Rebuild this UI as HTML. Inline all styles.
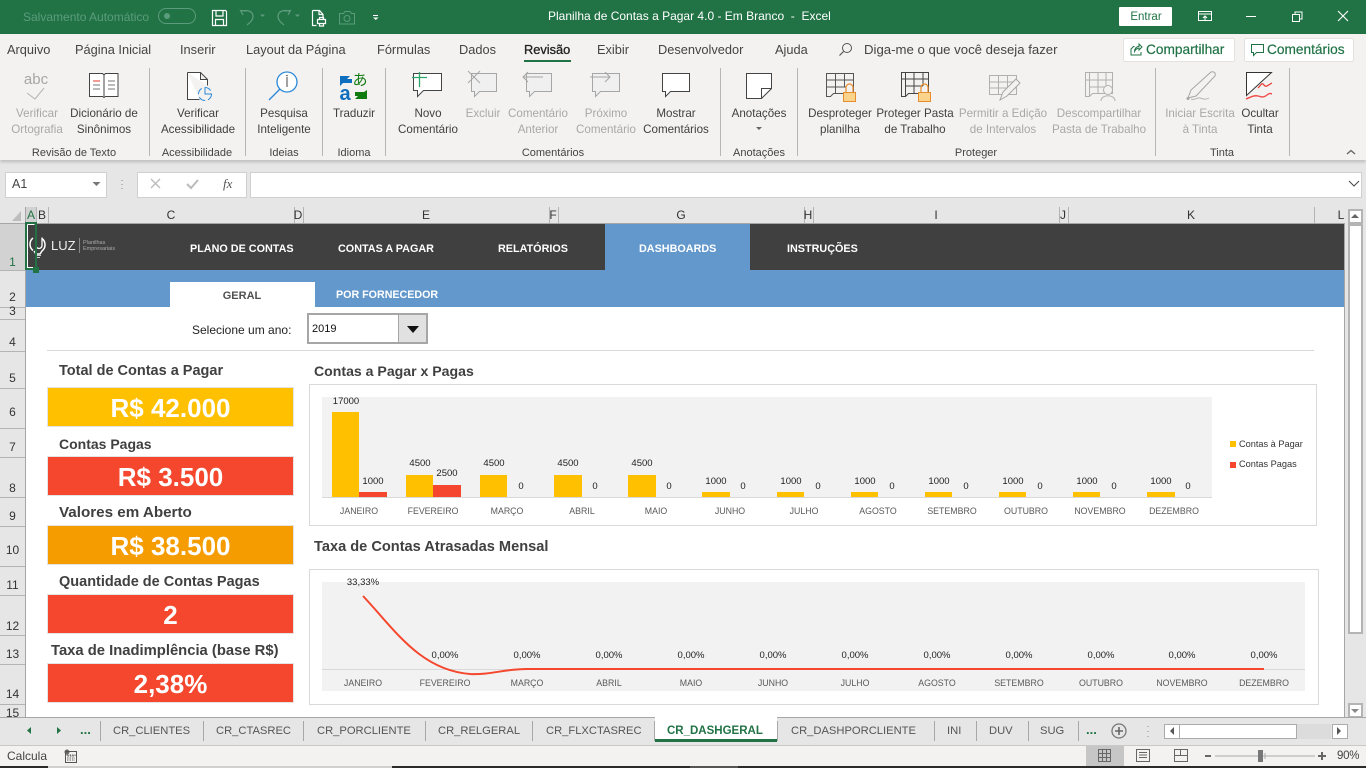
<!DOCTYPE html>
<html lang="pt-BR"><head><meta charset="utf-8"><title>Planilha de Contas a Pagar 4.0</title>
<style>
html,body{margin:0;padding:0}
body{width:1366px;height:768px;overflow:hidden;position:relative;background:#e6e6e6;font-family:"Liberation Sans",sans-serif;color:#333}
.a{position:absolute}
.t{position:absolute;white-space:nowrap;line-height:16px;font-size:11.6px;color:#404040}
.c{transform:translateX(-50%)}
.d{color:#a8a8a8}
.tab{font-size:12.8px;color:#444;top:42px}
.g{font-size:11px;color:#444;top:145px}
.sep{position:absolute;top:68px;width:1px;height:88px;background:#b8b6b4}
.ch{font-size:12px;top:207px;color:#333}
.rh{font-size:12px;color:#333;width:25px;left:0;text-align:center}
.rl{position:absolute;left:0;width:25px;height:1px;background:#b4b4b4}
.cl{position:absolute;top:207px;width:1px;height:16px;background:#b4b4b4}
.nav{font-size:10.8px;font-weight:bold;color:#fff;top:241px}
.lab{font-size:14.6px;font-weight:bold;color:#404040}
.kpi{position:absolute;left:47px;width:245px;height:38px;border:1px solid #e4e4e4;color:#fff;font-weight:bold;font-size:26px;line-height:40px;text-align:center}
.st{font-size:11.2px;color:#555;top:723px}
.ts{position:absolute;top:721px;width:1px;height:20px;background:#a8a8a8}
svg{position:absolute;left:0;top:0;overflow:visible}
svg text{font-family:"Liberation Sans",sans-serif}
</style></head><body>

<!-- title bar -->
<div class="a" style="left:0;top:0;width:1366px;height:34px;background:#217346"></div>
<div class="t" style="left:23px;top:9px;font-size:12px;color:#5c9c7c">Salvamento Automático</div>
<div class="t" style="left:548px;top:8px;font-size:12px;color:#fff">Planilha de Contas a Pagar 4.0 - Em Branco&nbsp; -&nbsp; Excel</div>
<div class="a" style="left:1119px;top:7px;width:53px;height:19px;background:#fff;border-radius:1px"></div>
<div class="t c" style="left:1146px;top:9px;font-size:11.5px;color:#217346">Entrar</div>

<!-- ribbon bg -->
<div class="a" style="left:0;top:34px;width:1366px;height:126px;background:#f3f2f1;box-shadow:0 2px 3px rgba(0,0,0,.18)"></div>

<div class="t tab" style="left:7px">Arquivo</div>
<div class="t tab" style="left:75px">Página Inicial</div>
<div class="t tab" style="left:180px">Inserir</div>
<div class="t tab" style="left:246px">Layout da Página</div>
<div class="t tab" style="left:377px">Fórmulas</div>
<div class="t tab" style="left:459px">Dados</div>
<div class="t tab" style="left:524px;color:#222;-webkit-text-stroke:.3px #222">Revisão</div>
<div class="a" style="left:524px;top:60px;width:47px;height:2px;background:#217346"></div>
<div class="t tab" style="left:597px">Exibir</div>
<div class="t tab" style="left:658px">Desenvolvedor</div>
<div class="t tab" style="left:775px">Ajuda</div>
<div class="t tab" style="left:864px;font-size:13.2px">Diga-me o que você deseja fazer</div>

<div class="a" style="left:1123px;top:38px;width:110px;height:22px;background:#fff;border:1px solid #e4e2e0;border-radius:2px"></div>
<div class="t" style="left:1146px;top:42px;font-size:13.7px;color:#217346;-webkit-text-stroke:.2px #217346">Compartilhar</div>
<div class="a" style="left:1244px;top:38px;width:108px;height:22px;background:#fff;border:1px solid #e4e2e0;border-radius:2px"></div>
<div class="t" style="left:1267px;top:42px;font-size:13.7px;color:#217346;-webkit-text-stroke:.2px #217346">Comentários</div>

<!-- ribbon separators -->
<div class="sep" style="left:149px"></div><div class="sep" style="left:245px"></div><div class="sep" style="left:322px"></div><div class="sep" style="left:385px"></div><div class="sep" style="left:720px"></div><div class="sep" style="left:797px"></div><div class="sep" style="left:1155px"></div><div class="sep" style="left:1289px"></div>

<!-- ribbon labels -->
<div class="t c d" style="left:37px;top:106px">Verificar</div><div class="t c d" style="left:37px;top:122px">Ortografia</div>
<div class="t c" style="left:104px;top:106px">Dicionário de</div><div class="t c" style="left:104px;top:122px">Sinônimos</div>
<div class="t c" style="left:198px;top:106px">Verificar</div><div class="t c" style="left:198px;top:122px">Acessibilidade</div>
<div class="t c" style="left:284px;top:106px">Pesquisa</div><div class="t c" style="left:284px;top:122px">Inteligente</div>
<div class="t c" style="left:354px;top:106px">Traduzir</div>
<div class="t c" style="left:428px;top:106px">Novo</div><div class="t c" style="left:428px;top:122px">Comentário</div>
<div class="t c d" style="left:483px;top:106px">Excluir</div>
<div class="t c d" style="left:538px;top:106px">Comentário</div><div class="t c d" style="left:538px;top:122px">Anterior</div>
<div class="t c d" style="left:606px;top:106px">Próximo</div><div class="t c d" style="left:606px;top:122px">Comentário</div>
<div class="t c" style="left:676px;top:106px">Mostrar</div><div class="t c" style="left:676px;top:122px">Comentários</div>
<div class="t c" style="left:759px;top:106px">Anotações</div>
<div class="t c" style="left:840px;top:106px">Desproteger</div><div class="t c" style="left:840px;top:122px">planilha</div>
<div class="t c" style="left:915px;top:106px">Proteger Pasta</div><div class="t c" style="left:915px;top:122px">de Trabalho</div>
<div class="t c d" style="left:1003px;top:106px">Permitir a Edição</div><div class="t c d" style="left:1003px;top:122px">de Intervalos</div>
<div class="t c d" style="left:1099px;top:106px">Descompartilhar</div><div class="t c d" style="left:1099px;top:122px">Pasta de Trabalho</div>
<div class="t c d" style="left:1200px;top:106px">Iniciar Escrita</div><div class="t c d" style="left:1200px;top:122px">à Tinta</div>
<div class="t c" style="left:1260px;top:106px">Ocultar</div><div class="t c" style="left:1260px;top:122px">Tinta</div>

<div class="t c g" style="left:74px">Revisão de Texto</div>
<div class="t c g" style="left:197px">Acessibilidade</div>
<div class="t c g" style="left:284px">Ideias</div>
<div class="t c g" style="left:354px">Idioma</div>
<div class="t c g" style="left:553px">Comentários</div>
<div class="t c g" style="left:759px">Anotações</div>
<div class="t c g" style="left:976px">Proteger</div>
<div class="t c g" style="left:1222px">Tinta</div>

<!-- formula bar -->
<div class="a" style="left:5px;top:172px;width:100px;height:24px;background:#fff;border:1px solid #d0d0d0"></div>
<div class="t" style="left:12px;top:176px;font-size:12.5px;color:#444">A1</div>
<div class="a" style="left:137px;top:172px;width:108px;height:24px;background:#fff;border:1px solid #d0d0d0"></div>
<div class="a" style="left:250px;top:172px;width:1110px;height:24px;background:#fff;border:1px solid #d0d0d0"></div>
<div class="t" style="left:223px;top:176px;font-size:13px;font-family:'Liberation Serif',serif;font-style:italic;color:#555">fx</div>

<!-- column headers -->
<div class="a" style="left:25px;top:207px;width:11px;height:16px;background:#d2d2d2"></div>
<div class="a" style="left:0;top:223px;width:1344px;height:1px;background:#a6a6a6"></div>
<div class="a" style="left:25px;top:207px;width:1px;height:510px;background:#a6a6a6"></div>
<div class="cl" style="left:36px"></div><div class="cl" style="left:48px"></div><div class="cl" style="left:294px"></div><div class="cl" style="left:303px"></div><div class="cl" style="left:549px"></div><div class="cl" style="left:558px"></div><div class="cl" style="left:804px"></div><div class="cl" style="left:813px"></div><div class="cl" style="left:1059px"></div><div class="cl" style="left:1068px"></div><div class="cl" style="left:1314px"></div>
<div class="t c ch" style="left:31px;color:#217346">A</div>
<div class="t c ch" style="left:42px">B</div>
<div class="t c ch" style="left:171px">C</div>
<div class="t c ch" style="left:298px">D</div>
<div class="t c ch" style="left:426px">E</div>
<div class="t c ch" style="left:553px">F</div>
<div class="t c ch" style="left:681px">G</div>
<div class="t c ch" style="left:808px">H</div>
<div class="t c ch" style="left:936px">I</div>
<div class="t c ch" style="left:1063px">J</div>
<div class="t c ch" style="left:1191px">K</div>
<div class="t c ch" style="left:1341px">L</div>

<!-- row headers -->
<div class="a" style="left:0;top:224px;width:25px;height:46px;background:#d2d2d2"></div>
<div class="rl" style="top:270px"></div><div class="rl" style="top:307px"></div><div class="rl" style="top:319px"></div><div class="rl" style="top:351px"></div><div class="rl" style="top:388px"></div><div class="rl" style="top:428px"></div><div class="rl" style="top:457px"></div><div class="rl" style="top:497px"></div><div class="rl" style="top:526px"></div><div class="rl" style="top:566px"></div><div class="rl" style="top:595px"></div><div class="rl" style="top:635px"></div><div class="rl" style="top:664px"></div><div class="rl" style="top:704px"></div>
<div class="t rh" style="top:254px;color:#217346">1</div>
<div class="t rh" style="top:289px">2</div>
<div class="t rh" style="top:303px">3</div>
<div class="t rh" style="top:334px">4</div>
<div class="t rh" style="top:370px">5</div>
<div class="t rh" style="top:404px">6</div>
<div class="t rh" style="top:439px">7</div>
<div class="t rh" style="top:480px">8</div>
<div class="t rh" style="top:508px">9</div>
<div class="t rh" style="top:542px">10</div>
<div class="t rh" style="top:577px">11</div>
<div class="t rh" style="top:618px">12</div>
<div class="t rh" style="top:646px">13</div>
<div class="t rh" style="top:686px">14</div>
<div class="t rh" style="top:705px">15</div>

<!-- sheet -->
<div class="a" style="left:26px;top:224px;width:1318px;height:493px;background:#fff"></div>
<div class="a" style="left:26px;top:224px;width:1318px;height:46px;background:#404040"></div>
<div class="a" style="left:26px;top:270px;width:1318px;height:37px;background:#6398cc"></div>
<div class="a" style="left:605px;top:224px;width:145px;height:46px;background:#6398cc"></div>
<div class="a" style="left:170px;top:282px;width:145px;height:25px;background:#fff"></div>
<div class="t" style="left:51px;top:238px;font-size:13px;color:#eee">LUZ</div>
<div class="a" style="left:79px;top:238px;width:1px;height:15px;background:#888"></div>
<div class="t" style="left:83px;top:240px;font-size:5.5px;line-height:6px;color:#aaa">Planilhas<br>Empresariais</div>
<div class="t nav" style="left:190px">PLANO DE CONTAS</div>
<div class="t nav" style="left:338px">CONTAS A PAGAR</div>
<div class="t nav" style="left:498px">RELATÓRIOS</div>
<div class="t nav" style="left:639px">DASHBOARDS</div>
<div class="t nav" style="left:787px">INSTRUÇÕES</div>
<div class="t c" style="left:242px;top:288px;font-size:11px;font-weight:bold;color:#505050">GERAL</div>
<div class="t" style="left:336px;top:287px;font-size:10.7px;font-weight:bold;color:#fff">POR FORNECEDOR</div>

<div class="t" style="left:192px;top:322px;font-size:12px;color:#222">Selecione um ano:</div>
<div class="a" style="left:307px;top:313px;width:117px;height:27px;border:2px solid #a6a6a6;background:#fff"></div>
<div class="a" style="left:398px;top:315px;width:28px;height:27px;background:#e1e1e1;border-left:1px solid #a6a6a6;box-sizing:border-box"></div>
<div class="t" style="left:312px;top:321px;font-size:11px;color:#111">2019</div>
<div class="a" style="left:47px;top:350px;width:1267px;height:1px;background:#d9d9d9"></div>

<!-- KPIs -->
<div class="t lab" style="left:59px;top:363px;font-size:14.5px">Total de Contas a Pagar</div>
<div class="kpi" style="top:387px;background:#ffc000">R$ 42.000</div>
<div class="t lab" style="left:59px;top:436px;font-size:14px">Contas Pagas</div>
<div class="kpi" style="top:456px;background:#f4472e">R$ 3.500</div>
<div class="t lab" style="left:59px;top:505px;font-size:15.2px">Valores em Aberto</div>
<div class="kpi" style="top:525px;background:#f59c00">R$ 38.500</div>
<div class="t lab" style="left:59px;top:574px;font-size:14.5px">Quantidade de Contas Pagas</div>
<div class="kpi" style="top:594px;background:#f4472e">2</div>
<div class="t lab" style="left:51px;top:643px;font-size:14.8px">Taxa de Inadimplência (base R$)</div>
<div class="kpi" style="top:663px;background:#f4472e">2,38%</div>

<div class="t lab" style="left:314px;top:363px;font-size:14.1px">Contas a Pagar x Pagas</div>
<div class="t lab" style="left:314px;top:539px">Taxa de Contas Atrasadas Mensal</div>

<!-- vertical scrollbar -->
<div class="a" style="left:1344px;top:207px;width:22px;height:510px;background:#e6e6e6"></div>
<div class="a" style="left:1344px;top:223px;width:1px;height:494px;background:#a6a6a6"></div>
<div class="a" style="left:1348px;top:209px;width:11px;height:11px;background:#fff;border:2px solid #b4b4b4"></div>
<div class="a" style="left:1348px;top:224px;width:11px;height:406px;background:#fff;border:2px solid #b4b4b4"></div>
<div class="a" style="left:1348px;top:703px;width:11px;height:11px;background:#fff;border:2px solid #b4b4b4"></div>

<!-- tab strip -->
<div class="a" style="left:0;top:717px;width:1366px;height:1px;background:#a6a6a6"></div>
<div class="a" style="left:0;top:718px;width:1366px;height:27px;background:#e6e6e6"></div>
<div class="a" style="left:655px;top:717px;width:122px;height:22px;background:#fff"></div>
<div class="a" style="left:655px;top:739px;width:122px;height:3px;background:#217346"></div>
<div class="ts" style="left:100px"></div><div class="ts" style="left:203px"></div><div class="ts" style="left:303px"></div><div class="ts" style="left:425px"></div><div class="ts" style="left:532px"></div><div class="ts" style="left:654px"></div><div class="ts" style="left:777px"></div><div class="ts" style="left:934px"></div><div class="ts" style="left:976px"></div><div class="ts" style="left:1028px"></div><div class="ts" style="left:1078px"></div>
<div class="t st" style="left:113px">CR_CLIENTES</div>
<div class="t st" style="left:216px">CR_CTASREC</div>
<div class="t st" style="left:317px">CR_PORCLIENTE</div>
<div class="t st" style="left:438px">CR_RELGERAL</div>
<div class="t st" style="left:546px">CR_FLXCTASREC</div>
<div class="t st" style="left:667px;color:#217346;font-weight:bold;font-size:11.5px">CR_DASHGERAL</div>
<div class="t st" style="left:791px">CR_DASHPORCLIENTE</div>
<div class="t st" style="left:947px">INI</div>
<div class="t st" style="left:989px">DUV</div>
<div class="t st" style="left:1040px">SUG</div>
<div class="t" style="left:80px;top:722px;font-size:13px;font-weight:bold;color:#217346">...</div>
<div class="t" style="left:1086px;top:722px;font-size:13px;font-weight:bold;color:#217346">...</div>
<div class="a" style="left:1164px;top:724px;width:14px;height:13px;background:#fff;border:1px solid #ababab"></div>
<div class="a" style="left:1179px;top:724px;width:116px;height:13px;background:#fff;border:1px solid #ababab"></div>
<div class="a" style="left:1297px;top:724px;width:34px;height:15px;background:#dcdcdc"></div>
<div class="a" style="left:1332px;top:724px;width:14px;height:13px;background:#fff;border:1px solid #ababab"></div>

<!-- status bar -->
<div class="a" style="left:0;top:745px;width:1366px;height:1px;background:#c8c8c8"></div>
<div class="a" style="left:0;top:746px;width:1366px;height:20px;background:#f3f2f1"></div>
<div class="a" style="left:0;top:766px;width:1366px;height:2px;background:#2b2b2b"></div>
<div class="a" style="left:48px;top:766px;width:344px;height:2px;background:#d0d0d0"></div>
<div class="a" style="left:690px;top:766px;width:48px;height:2px;background:#555"></div>
<div class="a" style="left:1086px;top:746px;width:38px;height:20px;background:#c6c6c6"></div>
<div class="t" style="left:7px;top:748px;font-size:12px;color:#444">Calcula</div>
<div class="t" style="left:1337px;top:748px;font-size:11.5px;color:#444;letter-spacing:-.3px">90%</div>

<!-- icons -->
<svg width="1366" height="768" viewBox="0 0 1366 768" fill="none">
<!-- title icons -->
<rect x="158.500" y="8.500" width="37" height="15" rx="7.500" stroke="#5c9c7c"/><circle cx="167" cy="16" r="3" fill="#5c9c7c"/>
<path d="M212.500 10.500h13l1 1v14h-14z M216 10.500v5.500h7v-5.500 M215.500 25.500v-6h8v6" stroke="#fff" stroke-width="1.200"/>
<path d="M243 15l-2.500-4.500 6 .5M241 11.500c5-2 12-1 12 5 0 3.500-3 6-6 8.500" stroke="#5c9c7c" stroke-width="1.200"/>
<path d="M260 14.500l2.500 2.500 2.500-2.500zM295 14.500l2.500 2.500 2.500-2.500z" fill="#5c9c7c"/>
<path d="M288 15l2.500-4.500-6 .5M290 11.500c-5-2-12-1-12 5 0 3.500 3 6 6 8.500" stroke="#5c9c7c" stroke-width="1.200"/>
<path d="M312.500 10.500h7l3.500 4v4M312.500 10.500v15h4M319 10.500v4h4" stroke="#fff" stroke-width="1.200"/>
<path d="M317.500 19.500h8v4h-8zM319.500 19.500v-2h4v2M319.500 23.500v2.500h4v-2.500" stroke="#fff" stroke-width="1.200"/>
<path d="M339.500 13.500h4l1.500-2h5l1.500 2h3v10.500h-15z" stroke="#5c9c7c"/><circle cx="347" cy="18.500" r="3" stroke="#5c9c7c"/>
<path d="M373 15.500h5" stroke="#fff"/><path d="M373 17.500h5.500l-2.750 2.500z" fill="#fff"/>
<path d="M1198.500 11.500h13v9h-13zM1198.500 14h13M1205 20v-4M1203 18l2-2 2 2" stroke="#fff"/>
<path d="M1246 16.500h10" stroke="#fff"/>
<path d="M1292.500 14.500h7v7h-7zM1295 14.500v-2.500h7v7h-2.500" stroke="#fff"/>
<path d="M1338 11l10 10M1348 11l-10 10" stroke="#fff" stroke-width="1.100"/>
<!-- search + share -->
<circle cx="847" cy="48" r="4.500" stroke="#555"/><path d="M843.500 51.500l-4 4" stroke="#555" stroke-width="1.200"/>
<path d="M1134.500 46.500h-1l-2.500 2.500v6h10v-3M1134.500 51.500c0-3 2-5 4.500-5v-2.500l3 3-3 3v-2c-1.500 0-3 1-4.500 3.500z" stroke="#217346"/>
<path d="M1251.500 44.500h12v8h-7l-3 3v-3h-2z" stroke="#217346"/>
<!-- abc -->
<text x="36" y="84" text-anchor="middle" font-size="15" fill="#a6a6a6">abc</text>
<path d="M27 93l8 6 9-11" stroke="#b5b5b5"/>
<!-- dictionary -->
<path d="M89.500 73.500h13l1.500 1.500 1.500-1.500h12.500v23h-13l-1 1-1-1h-13.500z" stroke="#444" fill="#fff"/>
<path d="M104 75v21" stroke="#444"/>
<path d="M93 81h7" stroke="#e8352b"/><path d="M93 85h7M93 89h7M108 81h7M108 85h7M108 89h7" stroke="#777"/>
<!-- accessibility -->
<path d="M187.500 72.500h13l7 7v6M187.500 72.500v27h12M200.500 72.500v7h7" stroke="#444" fill="#fff"/>
<circle cx="205" cy="94" r="6.500" stroke="#2b88d8" stroke-dasharray="7 3" fill="#f3f2f1"/>
<path d="M205 88v6h6" stroke="#2b88d8"/>
<!-- search -->
<circle cx="287" cy="82" r="10" stroke="#2b88d8" stroke-width="1.300" fill="#fff"/>
<path d="M280 89l-11 11" stroke="#2b88d8" stroke-width="1.300"/>
<path d="M287 77v10" stroke="#444"/><circle cx="287" cy="75.500" r=".8" fill="#444"/>
<!-- translate -->
<path d="M340 76v10l3-3h9v-4h-5l3-3z" fill="#106ebe"/>
<text x="345" y="100" text-anchor="middle" font-size="20" font-weight="bold" fill="#106ebe">a</text>
<text x="360" y="85" text-anchor="middle" font-size="15" fill="#107c10" style="font-family:'Noto Sans CJK JP',sans-serif">あ</text>
<path d="M367 90v9h-12l3-3h-3v-4h9z" fill="#107c10"/>
<!-- comments -->
<path d="M413.500 73.500h28v17h-18l-6 6v-6h-4z" stroke="#444" fill="#fff"/><path d="M419.500 72v15M412 77.500h15" stroke="#2ea56a" stroke-width="1.300"/>
<path d="M471.500 73.500h25v18h-17l-5 5v-5h-3z" stroke="#a6a6a6" fill="#f0f0f0"/><path d="M468 71l12 12M480 71l-12 12" stroke="#a6a6a6"/>
<path d="M526.500 73.500h25v18h-17l-5 5v-5h-3z" stroke="#a6a6a6" fill="#f0f0f0"/><path d="M523 77h20M528 72l-5 5 5 5" stroke="#a6a6a6"/>
<path d="M592.500 73.500h27v18h-19l-5 5v-5h-3z" stroke="#a6a6a6" fill="#f0f0f0"/><path d="M590 77h20M605 72l5 5-5 5" stroke="#a6a6a6"/>
<path d="M662.500 73.500h27v18h-19l-5 5v-5h-3z" stroke="#444" fill="#fff"/>
<!-- note -->
<path d="M746.500 73.500h25v15l-10 10h-15z" stroke="#444" fill="#fff"/><path d="M761.500 98v-9.500h10" stroke="#444"/>
<path d="M756 127h6l-3 3z" fill="#666"/>
<!-- protect sheet -->
<path d="M826.500 73.500h27v20h-20l-3 3h-4zM826.500 80h27M826.500 87h20M835.500 73.500v20M844.500 73.500v14" stroke="#555"/>
<rect x="843.500" y="92.500" width="12" height="9" fill="#fbd38a" stroke="#e88d2d"/><path d="M846 92v-4.500a3.500 3.500 0 0 1 7 0v4.500" stroke="#e88d2d" stroke-width="1.200"/>
<path d="M901.500 72.500h27v21h-20l-3 3h-4zM905.500 72.500v24M901.500 79h27M905 86h18M914 73v20M923 73v13" stroke="#444"/>
<rect x="918.500" y="92.500" width="12" height="9" fill="#fbd38a" stroke="#e88d2d"/><path d="M921 92v-4.500a3.500 3.500 0 0 1 7 0v4.500" stroke="#e88d2d" stroke-width="1.200"/>
<!-- allow edit -->
<path d="M989.500 75.500h27v19h-27zM989.500 82h27M989.500 88h27M998.500 75.500v19M1007.500 75.500v19" stroke="#b0b0b0"/>
<path d="M1000 100l3-8 13-13 4 4-13 13z" stroke="#a6a6a6" fill="#f3f2f1"/>
<path d="M1085.500 72.500h27v21h-20l-3 3h-4zM1089.500 72.500v24M1085.500 80h27M1089 87h17M1098 73v20M1106 73v14" stroke="#b0b0b0"/>
<circle cx="1108" cy="90" r="4.500" stroke="#b0b0b0" fill="#f3f2f1"/><path d="M1101 101c0-7 14-7 14 0" stroke="#b0b0b0" fill="#f3f2f1"/>
<!-- ink -->
<path d="M1188 98l3-8 20-18c3-1 5 1 4 4l-19 20z" stroke="#a6a6a6"/><circle cx="1188" cy="98.500" r="1.500" fill="#a6a6a6"/>
<path d="M1191 99c3 2 6-2 9-1s6 2 9 0" stroke="#b5b5b5"/>
<path d="M1246.500 72.500h25l-25 23z" fill="#fff"/>
<path d="M1246.500 95.500v-23h25l-25 23z" stroke="#333"/>
<path d="M1258 88c3-3 4-6 6-3s4 0 8-2" stroke="#e8352b" stroke-width="1.200"/>
<path d="M1246 99c5-2 8-4 12-3s5 2 9-1 4-1 5-1" stroke="#f04a4a" stroke-width="1.400"/>
<path d="M1347 154l4-3.500 4 3.500" stroke="#666" stroke-width="1.400"/>
<!-- formula bar marks -->
<path d="M92.500 182h8l-4 4z" fill="#777"/>
<path d="M122 180v1M122 184v1M122 188v1" stroke="#aaa" stroke-width="1.500"/>
<path d="M151 179l9 9M160 179l-9 9" stroke="#bbb" stroke-width="1.300"/>
<path d="M187 184l4 4 7-8" stroke="#bbb" stroke-width="2"/>
<path d="M1349 181l5 5 5-5" stroke="#444"/>
<!-- select-all triangle -->
<path d="M21 211v10h-9z" fill="#bdbdbd"/>
<!-- logo -->
<path d="M33 238a8 8 0 0 0 0 12.500M34 251l2 3h4l2-3a8 8 0 0 0 0-12.500" stroke="#fff" stroke-width="1.500"/>
<path d="M36 237.500v8a3 3 0 0 0 6 0v-8" stroke="#fff" stroke-width="1.300"/>
<path d="M35 255.500h6M36 257.500h4" stroke="#ccc"/>
<!-- selection -->
<rect x="26" y="223" width="10" height="46" stroke="#217346" stroke-width="2"/>
<path d="M27.500 224.500h7M27.500 224.500v43h7" stroke="#fff"/>
<rect x="33" y="267" width="6" height="6" fill="#217346"/>
<!-- combobox arrow -->
<path d="M407 326h12l-6 7z" fill="#111"/>
<!-- vscroll arrows -->
<path d="M1351 218l4-4 4 4z" fill="#666"/><path d="M1351 709l4 4 4-4z" fill="#888"/>
<!-- tab arrows -->
<path d="M31 727l-4 3.500 4 3.500z" fill="#217346"/><path d="M57 727l4 3.500-4 3.500z" fill="#217346"/>
<circle cx="1119" cy="731" r="7" stroke="#777" stroke-width="1.300"/><path d="M1115 731h8M1119 727v8" stroke="#666" stroke-width="1.600"/>
<path d="M1148 726v1M1148 731v1M1148 736v1" stroke="#aaa" stroke-width="1.500"/>
<path d="M1174 727l-4 4 4 4z" fill="#555"/><path d="M1337 727l4 4-4 4z" fill="#555"/>
<!-- status icons -->
<circle cx="67" cy="752" r="2.500" fill="#666"/><rect x="65.500" y="751.500" width="11" height="11" stroke="#555"/><path d="M67 755h8v1h-8zM67 758h8M67 760h8" stroke="#666" stroke-dasharray="1.500 1"/>
<path d="M1098.500 749.500h12v12h-12zM1098.500 753.500h12M1098.500 757.500h12M1102.500 749.500v12M1106.500 749.500v12" stroke="#666"/>
<path d="M1136.500 749.500h13v12h-13zM1139 752.500h8M1139 755h8M1139 757.500h8" stroke="#666"/>
<path d="M1174.500 749.500h13v12h-13zM1174.500 755.500h6v-6M1187.500 755.500h-7" stroke="#666"/>
<path d="M1205 756h6" stroke="#666" stroke-width="2"/>
<path d="M1215 756h100" stroke="#aaa"/><path d="M1265 753v6" stroke="#aaa"/>
<rect x="1258" y="750" width="5" height="12" fill="#777"/>
<path d="M1318 756h8M1322 752v8" stroke="#666" stroke-width="2"/>
</svg>

<!-- chart 1 -->
<svg width="1366" height="768" viewBox="0 0 1366 768">
<rect x="309.500" y="384.500" width="1007" height="141" fill="#fff" stroke="#d9d9d9"/>
<rect x="322" y="397" width="890" height="100" fill="#f2f2f2"/>
<path d="M322 497.500h890" stroke="#d9d9d9"/>
<g fill="#ffc000">
<rect x="332" y="412" width="27" height="85"/><rect x="406" y="475" width="27" height="22"/><rect x="480" y="475" width="27" height="22"/><rect x="554" y="475" width="28" height="22"/><rect x="628" y="475" width="28" height="22"/><rect x="702" y="492" width="28" height="5"/><rect x="777" y="492" width="27" height="5"/><rect x="851" y="492" width="27" height="5"/><rect x="925" y="492" width="27" height="5"/><rect x="999" y="492" width="27" height="5"/><rect x="1073" y="492" width="27" height="5"/><rect x="1147" y="492" width="28" height="5"/>
</g>
<g fill="#f4472e"><rect x="359" y="492" width="28" height="5"/><rect x="433" y="485" width="28" height="12"/></g>
<g font-size="9.500" fill="#222" text-anchor="middle">
<text x="346" y="404">17000</text><text x="373" y="484">1000</text>
<text x="420" y="466">4500</text><text x="447" y="476">2500</text>
<text x="494" y="466">4500</text><text x="521" y="489">0</text>
<text x="568" y="466">4500</text><text x="595" y="489">0</text>
<text x="642" y="466">4500</text><text x="669" y="489">0</text>
<text x="716" y="484">1000</text><text x="743" y="489">0</text>
<text x="791" y="484">1000</text><text x="818" y="489">0</text>
<text x="865" y="484">1000</text><text x="892" y="489">0</text>
<text x="939" y="484">1000</text><text x="966" y="489">0</text>
<text x="1013" y="484">1000</text><text x="1040" y="489">0</text>
<text x="1087" y="484">1000</text><text x="1114" y="489">0</text>
<text x="1161" y="484">1000</text><text x="1188" y="489">0</text>
</g>
<g font-size="8.800" fill="#595959" text-anchor="middle">
<text x="359" y="514">JANEIRO</text><text x="433" y="514">FEVEREIRO</text><text x="507" y="514">MARÇO</text><text x="582" y="514">ABRIL</text><text x="656" y="514">MAIO</text><text x="730" y="514">JUNHO</text><text x="804" y="514">JULHO</text><text x="878" y="514">AGOSTO</text><text x="952" y="514">SETEMBRO</text><text x="1026" y="514">OUTUBRO</text><text x="1100" y="514">NOVEMBRO</text><text x="1174" y="514">DEZEMBRO</text>
</g>
<rect x="1230" y="441" width="6" height="6" fill="#ffc000"/><text x="1239" y="447" font-size="9.200" fill="#333">Contas à Pagar</text>
<rect x="1230" y="462" width="6" height="6" fill="#f4472e"/><text x="1239" y="467" font-size="9.200" fill="#333">Contas Pagas</text>
</svg>

<!-- chart 2 -->
<svg width="1366" height="768" viewBox="0 0 1366 768">
<rect x="309.500" y="569.500" width="1009" height="135" fill="#fff" stroke="#d9d9d9"/>
<rect x="322" y="582" width="983" height="109" fill="#f2f2f2"/>
<path d="M322 669.500h983" stroke="#d9d9d9"/>
<path d="M363 596C395 630 420 670 470 674C490 675 505 669 527 669L1264 669" fill="none" stroke="#f4472e" stroke-width="2"/>
<g font-size="9.500" fill="#222" text-anchor="middle">
<text x="363" y="585">33,33%</text><text x="445" y="658">0,00%</text><text x="527" y="658">0,00%</text><text x="609" y="658">0,00%</text><text x="691" y="658">0,00%</text><text x="773" y="658">0,00%</text><text x="855" y="658">0,00%</text><text x="937" y="658">0,00%</text><text x="1019" y="658">0,00%</text><text x="1101" y="658">0,00%</text><text x="1182" y="658">0,00%</text><text x="1264" y="658">0,00%</text>
</g>
<g font-size="8.800" fill="#595959" text-anchor="middle">
<text x="363" y="686">JANEIRO</text><text x="445" y="686">FEVEREIRO</text><text x="527" y="686">MARÇO</text><text x="609" y="686">ABRIL</text><text x="691" y="686">MAIO</text><text x="773" y="686">JUNHO</text><text x="855" y="686">JULHO</text><text x="937" y="686">AGOSTO</text><text x="1019" y="686">SETEMBRO</text><text x="1101" y="686">OUTUBRO</text><text x="1182" y="686">NOVEMBRO</text><text x="1264" y="686">DEZEMBRO</text>
</g>
</svg>
</body></html>
